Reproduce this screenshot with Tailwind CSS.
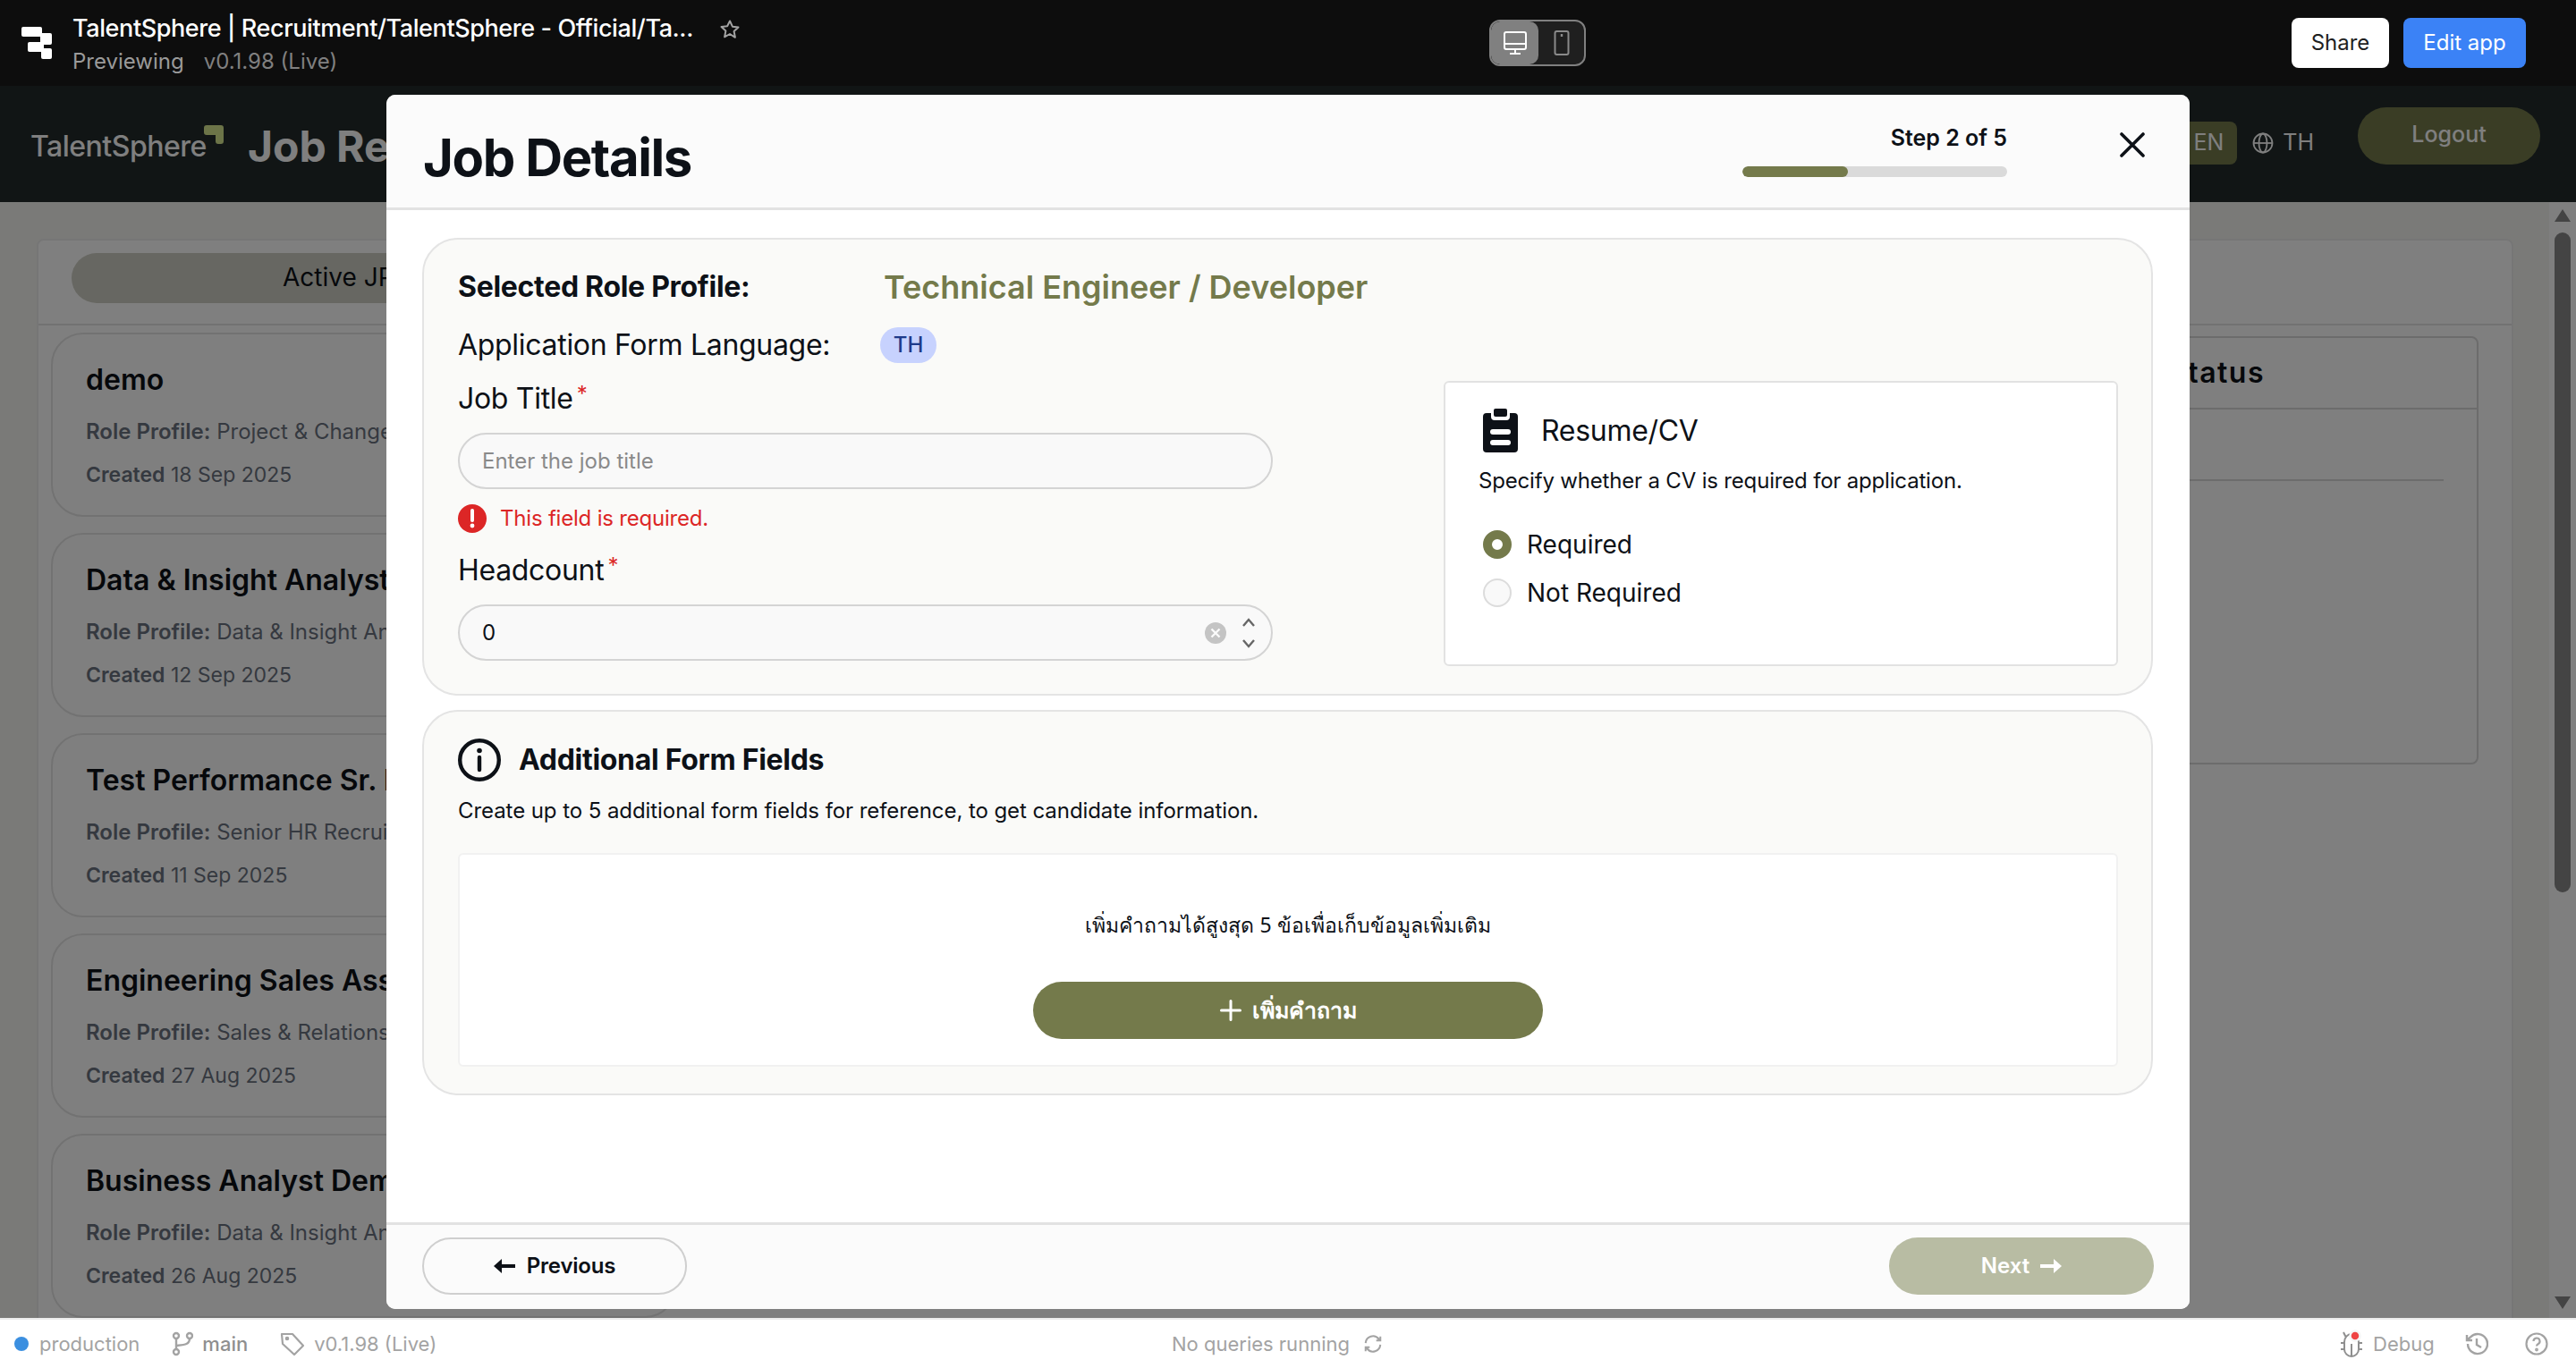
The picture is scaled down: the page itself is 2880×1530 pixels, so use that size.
<!DOCTYPE html>
<html lang="en">
<head>
    <meta charset="UTF-8">
    <title>TalentSphere - Job Details</title>
    <script src="https://cdn.jsdelivr.net/npm/@tailwindcss/browser@4"></script>
</head>
<body class="font-[Inter,'Noto_Sans',sans-serif] text-[#0d1117] bg-white">
<div class="w-[2880px] h-[1530px] flex flex-col overflow-hidden">

    <!-- Top bar -->
    <header class="h-[96px] shrink-0 bg-[#0d0d0d] flex items-center justify-between pl-[23px] pr-[56px] relative">
        <div class="flex items-center">
            <svg class="w-[36px] h-[38px]" viewBox="0 0 36 38" fill="#fff"><rect x="1" y="1" width="23" height="11" rx="2"/><rect x="22" y="8" width="13" height="13" rx="2"/><rect x="8" y="18" width="18" height="11" rx="2"/><rect x="23" y="25" width="12" height="12" rx="2"/></svg>
            <div class="ml-[22px] pt-[3px]">
                <div class="flex items-center h-[38px]">
                    <span class="text-[27px] font-medium text-white w-[697px] whitespace-nowrap tracking-[-0.4px]">TalentSphere | Recruitment/TalentSphere - Official/Ta...</span>
                    <svg class="w-[24px] h-[24px] ml-[26px]" viewBox="0 0 24 24" fill="none" stroke="#a3a3a3" stroke-width="2" stroke-linejoin="round"><path d="M12 2.5l2.9 6.2 6.6.8-4.9 4.6 1.3 6.7L12 17l-5.9 3.3 1.3-6.7-4.9-4.6 6.6-.8z"/></svg>
                </div>
                <div class="flex items-center h-[34px] text-[24px] text-[#9a9a9a] whitespace-nowrap">
                    <span>Previewing</span><span class="ml-[22px] text-[#808080]">v0.1.98 (Live)</span>
                </div>
            </div>
        </div>
        <div class="absolute left-[1665px] top-[22px] w-[108px] h-[52px] rounded-[12px] border-2 border-[#808080] bg-[#1f1f1f] flex overflow-hidden">
            <div class="w-[53px] bg-[#808080] rounded-[10px] flex items-center justify-center">
                <svg class="w-[28px] h-[26px]" viewBox="0 0 28 26" fill="none" stroke="#fff" stroke-width="2"><rect x="2" y="1" width="24" height="19" rx="2"/><path d="M2 14h24M14 20v5M8 25h12"/></svg>
            </div>
            <div class="flex-1 flex items-center justify-center">
                <svg class="w-[18px] h-[28px]" viewBox="0 0 18 28" fill="none" stroke="#8a8a8a" stroke-width="2"><rect x="1.5" y="1" width="15" height="26" rx="2"/><path d="M9 4v3" stroke-width="2.4"/></svg>
            </div>
        </div>
        <div class="flex gap-[16px] text-[24px]">
            <button class="w-[109px] h-[56px] rounded-[8px] bg-white text-[#1f1f1f]">Share</button>
            <button class="w-[137px] h-[56px] rounded-[8px] bg-[#3b82f6] text-white">Edit app</button>
        </div>
    </header>

    <!-- App under the dialog -->
    <div class="flex-1 relative overflow-hidden bg-[#f5f5f0]">
        <div class="h-[130px] bg-[#222b2a] flex justify-between pl-[34px] pr-[40px]">
            <div class="flex items-center pt-[5px]">
                <span class="text-[32px] font-medium text-white tracking-[-0.5px] w-[199px] whitespace-nowrap">TalentSphere</span>
                <svg class="-ml-[5px] -mt-[26px] w-[22px] h-[21px]" viewBox="0 0 22 21" fill="#d8e890"><path d="M3 0h16a3 3 0 0 1 3 3v15a3 3 0 0 1-3 3h-3a3 3 0 0 1-3-3v-7H3a3 3 0 0 1-3-3V3a3 3 0 0 1 3-3z"/></svg>
                <span class="ml-[27px] text-[48px] font-bold text-white whitespace-nowrap">Job Re</span>
            </div>
            <div class="flex items-start pt-[24px]">
                <div class="flex items-center mt-[16px] text-[25px] text-white">
                    <span class="w-[90px] h-[48px] rounded-[8px] bg-[#747a4b] flex items-center justify-end pr-[15px]">EN</span>
                    <svg class="w-[24px] h-[24px] ml-[17px]" viewBox="0 0 24 24" fill="none" stroke="#fff" stroke-width="1.8"><circle cx="12" cy="12" r="10.5"/><ellipse cx="12" cy="12" rx="4.5" ry="10.5"/><path d="M1.5 12h21"/></svg>
                    <span class="ml-[10px]">TH</span>
                </div>
                <button class="ml-[49px] w-[204px] h-[64px] rounded-full bg-[#747a4b] text-white text-[25px] font-medium pb-[3px]">Logout</button>
            </div>
        </div>
        <div class="flex pl-[41px] pt-[41px]">
            <div class="w-[2769px] h-[1300px] bg-white border-2 border-[#ececec] rounded-[8px]">
                <div class="h-[95px] border-b-2 border-[#e5e5e5] pl-[37px] pt-[14px]">
                    <div class="w-[1500px] h-[56px] rounded-full bg-[#cfcfc4] flex items-center pl-[236px] pb-[3px] text-[28px]">Active JPs</div>
                </div>
                <div class="relative">
                    <div class="pl-[14px] pt-[8px] flex flex-col gap-[18px]">
                        <div class="w-[700px] h-[206px] rounded-[36px] border-2 border-[#e5e5e5] pl-[37px] relative whitespace-nowrap">
                            <div class="pt-[32px] text-[32px] font-semibold h-[68px] leading-[38px]">demo</div>
                            <div class="mt-[23px] text-[24px] text-[#6b7280]"><span class="font-semibold">Role Profile:</span> Project &amp; Change Manager</div>
                            <div class="mt-[13px] text-[23px] text-[#6b7280]"><span class="font-semibold">Created</span> 18 Sep 2025</div>
                        </div>
                        <div class="w-[700px] h-[206px] rounded-[36px] border-2 border-[#e5e5e5] pl-[37px] relative whitespace-nowrap">
                            <div class="pt-[32px] text-[32px] font-semibold h-[68px] leading-[38px]">Data &amp; Insight Analyst</div>
                            <div class="mt-[23px] text-[24px] text-[#6b7280]"><span class="font-semibold">Role Profile:</span> Data &amp; Insight Analyst</div>
                            <div class="mt-[13px] text-[23px] text-[#6b7280]"><span class="font-semibold">Created</span> 12 Sep 2025</div>
                        </div>
                        <div class="w-[700px] h-[206px] rounded-[36px] border-2 border-[#e5e5e5] pl-[37px] relative whitespace-nowrap">
                            <div class="pt-[32px] text-[32px] font-semibold h-[68px] leading-[38px]">Test Performance Sr. HR</div>
                            <div class="mt-[23px] text-[24px] text-[#6b7280]"><span class="font-semibold">Role Profile:</span> Senior HR Recruiter</div>
                            <div class="mt-[13px] text-[23px] text-[#6b7280]"><span class="font-semibold">Created</span> 11 Sep 2025</div>
                        </div>
                        <div class="w-[700px] h-[206px] rounded-[36px] border-2 border-[#e5e5e5] pl-[37px] relative whitespace-nowrap">
                            <div class="pt-[32px] text-[32px] font-semibold h-[68px] leading-[38px]">Engineering Sales Assistant</div>
                            <div class="mt-[23px] text-[24px] text-[#6b7280]"><span class="font-semibold">Role Profile:</span> Sales &amp; Relationship</div>
                            <div class="mt-[13px] text-[23px] text-[#6b7280]"><span class="font-semibold">Created</span> 27 Aug 2025</div>
                        </div>
                        <div class="w-[700px] h-[206px] rounded-[36px] border-2 border-[#e5e5e5] pl-[37px] relative whitespace-nowrap">
                            <div class="pt-[32px] text-[32px] font-semibold h-[68px] leading-[38px]">Business Analyst Demo</div>
                            <div class="mt-[23px] text-[24px] text-[#6b7280]"><span class="font-semibold">Role Profile:</span> Data &amp; Insight Analyst</div>
                            <div class="mt-[13px] text-[23px] text-[#6b7280]"><span class="font-semibold">Created</span> 26 Aug 2025</div>
                        </div>
                    </div>
                    <!-- status card on the right -->
                    <div class="absolute left-[1800px] top-[12px] w-[928px] h-[479px] border-2 border-[#d8d8d8] rounded-[8px]">
                        <div class="h-[80px] border-b-2 border-[#d8d8d8] flex items-center justify-end pr-[237px] text-[32px] font-semibold tracking-[1.5px]">Status</div>
                        <div class="h-[80px] border-b-2 border-[#d8d8d8] mr-[37px]"></div>
                    </div>
                </div>
            </div>
            <!-- page scrollbar -->
            <div class="absolute right-0 top-[130px] bottom-0 w-[30px] bg-[#fff] flex flex-col items-center">
                <svg class="w-[18px] h-[14px] mt-[8px]" viewBox="0 0 18 14" fill="#888"><path d="M9 0l9 14H0z"/></svg>
                <div class="w-[18px] h-[738px] mt-[12px] rounded-full bg-[#888]"></div>
                <div class="flex-1"></div>
                <svg class="w-[18px] h-[14px] mb-[10px]" viewBox="0 0 18 14" fill="#888"><path d="M0 0h18L9 14z"/></svg>
            </div>
        </div>

        <!-- Overlay -->
        <div class="absolute inset-0 bg-black/50"></div>

        <!-- Dialog -->
        <div class="absolute left-[432px] top-[10px] w-[2016px] h-[1358px] bg-white rounded-[10px] flex flex-col overflow-hidden">
            <div class="h-[129px] shrink-0 bg-[#fbfbfb] border-b-[3px] border-[#e2e2e2] flex justify-between pl-[41px] pr-[50px]">
                <h1 class="text-[58px] font-bold leading-none pt-[41px] whitespace-nowrap tracking-[-1.4px]">Job Details</h1>
                <div class="flex">
                    <div class="w-[296px] flex flex-col items-end">
                        <div class="pt-[32px] h-[80px] text-[25px] font-semibold leading-[32px]">Step 2 of 5</div>
                        <div class="w-full h-[12px] rounded-full bg-[#dadada] overflow-hidden"><div class="h-full rounded-full bg-[#747a4b]" style="width:40%"></div></div>
                    </div>
                    <svg class="w-[28px] h-[28px] ml-[126px] mt-[42px]" viewBox="0 0 28 28" stroke="#0d1117" stroke-width="3.6" stroke-linecap="round"><path d="M2 2l24 24M26 2L2 26"/></svg>
                </div>
            </div>

            <div class="flex-1 pl-[40px] pt-[31px] flex flex-col gap-[16px]">
                <!-- Role, title, headcount, CV -->
                <section class="w-[1935px] h-[512px] bg-[#fafaf8] border-2 border-[#e4e4e4] rounded-[40px] pl-[38px] pr-[37px] pt-[33px]">
                    <div class="flex items-center h-[40px] whitespace-nowrap">
                        <span class="w-[476px] text-[32px] font-bold tracking-[-0.3px]">Selected Role Profile:</span>
                        <span class="text-[36px] font-semibold text-[#747a4b]">Technical Engineer / Developer</span>
                    </div>
                    <div class="flex items-center h-[40px] mt-[25px] whitespace-nowrap">
                        <span class="w-[472px] text-[32px] tracking-[-0.3px]">Application Form Language:</span>
                        <span class="w-[63px] h-[40px] rounded-[20px] bg-[#c7d2fe] text-[#1e3a8a] text-[24px] font-medium flex items-center justify-center">TH</span>
                    </div>
                    <div class="flex justify-between mt-[20px]">
                        <div class="w-[911px]">
                            <label class="h-[40px] flex items-center text-[32px] tracking-[-0.3px]">Job Title<span class="text-[#dc2626] text-[24px] ml-[4px] -mt-[10px]">*</span></label>
                            <div class="mt-[18px] h-[63px] rounded-full border-2 border-[#d4d4d4] bg-[#f9f9f9] flex items-center pl-[25px] text-[24px] text-[#8a8a8a]">Enter the job title</div>
                            <div class="mt-[16px] h-[34px] flex items-center">
                                <svg class="w-[32px] h-[32px]" viewBox="0 0 32 32"><circle cx="16" cy="16" r="16" fill="#dc2626"/><path d="M16 7v11" stroke="#fff" stroke-width="4" stroke-linecap="round"/><circle cx="16" cy="24" r="2.4" fill="#fff"/></svg>
                                <span class="ml-[15px] text-[24px] tracking-[-0.2px] text-[#dc2626]">This field is required.</span>
                            </div>
                            <label class="mt-[21px] h-[40px] flex items-center text-[32px] tracking-[-0.3px]">Headcount<span class="text-[#dc2626] text-[24px] ml-[4px] -mt-[10px]">*</span></label>
                            <div class="mt-[18px] h-[63px] rounded-full border-2 border-[#d4d4d4] bg-[#f9f9f9] flex items-center pl-[25px] pr-[18px] text-[24px]">
                                <span class="flex-1">0</span>
                                <svg class="w-[24px] h-[24px]" viewBox="0 0 24 24"><circle cx="12" cy="12" r="12" fill="#c4c4c4"/><path d="M7.5 7.5l9 9M16.5 7.5l-9 9" stroke="#fafafa" stroke-width="2.4"/></svg>
                                <div class="ml-[18px] flex flex-col gap-[14px]">
                                    <svg class="w-[14px] h-[10px]" viewBox="0 0 14 10" fill="none" stroke="#666" stroke-width="2.4"><path d="M1 9l6-7 6 7"/></svg>
                                    <svg class="w-[14px] h-[10px]" viewBox="0 0 14 10" fill="none" stroke="#666" stroke-width="2.4"><path d="M1 1l6 7 6-7"/></svg>
                                </div>
                            </div>
                        </div>
                        <div class="w-[754px] h-[319px] bg-white border-2 border-[#e2e2e2] rounded-[6px] pl-[37px] pt-[29px]">
                            <div class="flex items-center">
                                <svg class="ml-[5px] w-[39px] h-[49px]" viewBox="0 0 39 49"><path d="M4 5h5v4a4 4 0 0 0 4 4h13a4 4 0 0 0 4-4V5h5a4 4 0 0 1 4 4v36a4 4 0 0 1-4 4H4a4 4 0 0 1-4-4V9a4 4 0 0 1 4-4z" fill="#0d1117"/><rect x="12" y="0" width="15" height="9" rx="2" fill="#0d1117"/><rect x="8" y="23" width="23" height="6" rx="3" fill="#fff"/><rect x="8" y="35" width="23" height="6" rx="3" fill="#fff"/></svg>
                                <span class="ml-[26px] text-[32px] tracking-[-0.3px]">Resume/CV</span>
                            </div>
                            <p class="mt-[16px] text-[24px] leading-[32px] whitespace-nowrap tracking-[-0.18px]">Specify whether a CV is required for application.</p>
                            <div class="mt-[39px] ml-[5px] flex items-center h-[32px]">
                                <span class="w-[32px] h-[32px] rounded-full border-[10px] border-[#747a4b] bg-white"></span>
                                <span class="ml-[17px] text-[28px]">Required</span>
                            </div>
                            <div class="mt-[22px] ml-[5px] flex items-center h-[32px]">
                                <span class="w-[32px] h-[32px] rounded-full border-2 border-[#dcdcdc] bg-[#f9f9f9]"></span>
                                <span class="ml-[17px] text-[28px]">Not Required</span>
                            </div>
                        </div>
                    </div>
                </section>

                <!-- Additional fields -->
                <section class="w-[1935px] h-[431px] bg-[#fafaf8] border-2 border-[#e4e4e4] rounded-[40px] pl-[38px] pr-[37px] pt-[30px]">
                    <div class="flex items-center h-[48px]">
                        <svg class="w-[48px] h-[48px]" viewBox="0 0 48 48" fill="none" stroke="#0d1117" stroke-width="4.4"><circle cx="24" cy="24" r="21.8"/><path d="M24 21v14" stroke-linecap="round"/><circle cx="24" cy="13.5" r="2.8" fill="#0d1117" stroke="none"/></svg>
                        <h2 class="ml-[20px] text-[32px] font-bold whitespace-nowrap tracking-[-0.3px]">Additional Form Fields</h2>
                    </div>
                    <p class="mt-[17px] h-[32px] leading-[32px] text-[24px] whitespace-nowrap tracking-[-0.07px]">Create up to 5 additional form fields for reference, to get candidate information.</p>
                    <div class="mt-[31px] w-[1856px] h-[239px] bg-white border-2 border-[#f1f1f1] rounded-[6px] flex flex-col items-center pt-[60px]">
                        <p class="h-[36px] leading-[36px] text-[23px] whitespace-nowrap font-['Noto_Sans',sans-serif]">เพิ่มคำถามได้สูงสุด 5 ข้อเพื่อเก็บข้อมูลเพิ่มเติม</p>
                        <button class="mt-[46px] w-[570px] h-[64px] rounded-full bg-[#747a4b] text-white flex items-center justify-center">
                            <svg class="w-[24px] h-[24px]" viewBox="0 0 24 24" stroke="#fff" stroke-width="3" stroke-linecap="round"><path d="M12 1.5v21M1.5 12h21"/></svg>
                            <span class="ml-[12px] text-[25px] font-semibold font-['Noto_Sans',sans-serif]">เพิ่มคำถาม</span>
                        </button>
                    </div>
                </section>
            </div>

            <!-- Footer -->
            <div class="h-[97px] shrink-0 bg-[#fbfbfb] border-t-[3px] border-[#e2e2e2] flex items-center justify-between pl-[40px] pr-[40px] pb-[3px]">
                <button class="w-[296px] h-[64px] rounded-full border-2 border-[#cfcfcf] flex items-center justify-center text-[24px] tracking-[-0.2px] font-semibold">
                    <svg class="w-[24px] h-[18px] mr-[13px]" viewBox="0 0 24 18" fill="#0d1117"><path d="M0 9l9-8v6h15v4H9v6z"/></svg>
                    Previous
                </button>
                <button class="w-[296px] h-[64px] rounded-full bg-[#b8bca3] flex items-center justify-center text-[24px] font-semibold text-white">
                    Next
                    <svg class="w-[24px] h-[18px] ml-[12px]" viewBox="0 0 24 18" fill="#fff"><path d="M24 9l-9-8v6H0v4h15v6z"/></svg>
                </button>
            </div>
        </div>
    </div>

    <!-- Status bar -->
    <footer class="h-[56px] shrink-0 bg-white border-t-2 border-[#ececec] relative flex items-center text-[22px] text-[#a3a3a3] whitespace-nowrap">
        <span class="ml-[16px] w-[16px] h-[16px] rounded-full bg-[#3b8fe0]"></span>
        <span class="ml-[12px]">production</span>
        <svg class="ml-[36px] w-[24px] h-[28px]" viewBox="0 0 24 28" fill="none" stroke="#a3a3a3" stroke-width="2.4"><circle cx="5" cy="5" r="3"/><circle cx="20" cy="5" r="3"/><circle cx="5" cy="23" r="3"/><path d="M5 8v12M20 8c0 7-6 7-15 8"/></svg>
        <span class="ml-[10px] font-medium text-[#8f8f8f]">main</span>
        <svg class="ml-[36px] w-[28px] h-[28px]" viewBox="0 0 28 28" fill="none" stroke="#a3a3a3" stroke-width="2.2" stroke-linejoin="round"><path d="M2 3h12l12 13-10 10L3 14z"/><circle cx="8" cy="8" r="1.2"/></svg>
        <span class="ml-[10px]">v0.1.98 (Live)</span>
        <div class="absolute left-[1310px] flex items-center">
            <span>No queries running</span>
            <svg class="ml-[15px] w-[22px] h-[22px]" viewBox="0 0 24 24" fill="none" stroke="#a3a3a3" stroke-width="2.2"><path d="M3 11a9 9 0 0 1 16-5l2 2M21 13a9 9 0 0 1-16 5l-2-2M21 3v5h-5M3 21v-5h5"/></svg>
        </div>
        <div class="absolute left-[2616px] flex items-center">
            <svg class="w-[28px] h-[32px]" viewBox="0 0 28 32" fill="none" stroke="#8f8f8f" stroke-width="2"><path d="M5 14a8 9 0 0 1 16 0v8a8 8 0 0 1-16 0zM13 16v14M5 15H1M5 22H1M21 15h4M21 22h4M7 9L4 3"/><circle cx="17" cy="7" r="5.5" fill="#ef4444" stroke="#f5f5f5" stroke-width="2.5"/></svg>
            <span class="ml-[9px] text-[22px]">Debug</span>
            <svg class="ml-[34px] w-[26px] h-[26px]" viewBox="0 0 26 26" fill="none" stroke="#a3a3a3" stroke-width="2.4"><path d="M3 13a11 11 0 1 0 3-7.5L2 9M2 3v6h6M13 7v7l5 3"/></svg>
            <svg class="ml-[41px] w-[26px] h-[26px]" viewBox="0 0 26 26" fill="none" stroke="#a3a3a3" stroke-width="2.2"><circle cx="13" cy="13" r="11.5"/><path d="M9.5 10a3.5 3.5 0 1 1 5 3.2c-1 .6-1.5 1.2-1.5 2.3"/><circle cx="13" cy="19.5" r=".8"/></svg>
        </div>
    </footer>
</div>
</body>
</html>
